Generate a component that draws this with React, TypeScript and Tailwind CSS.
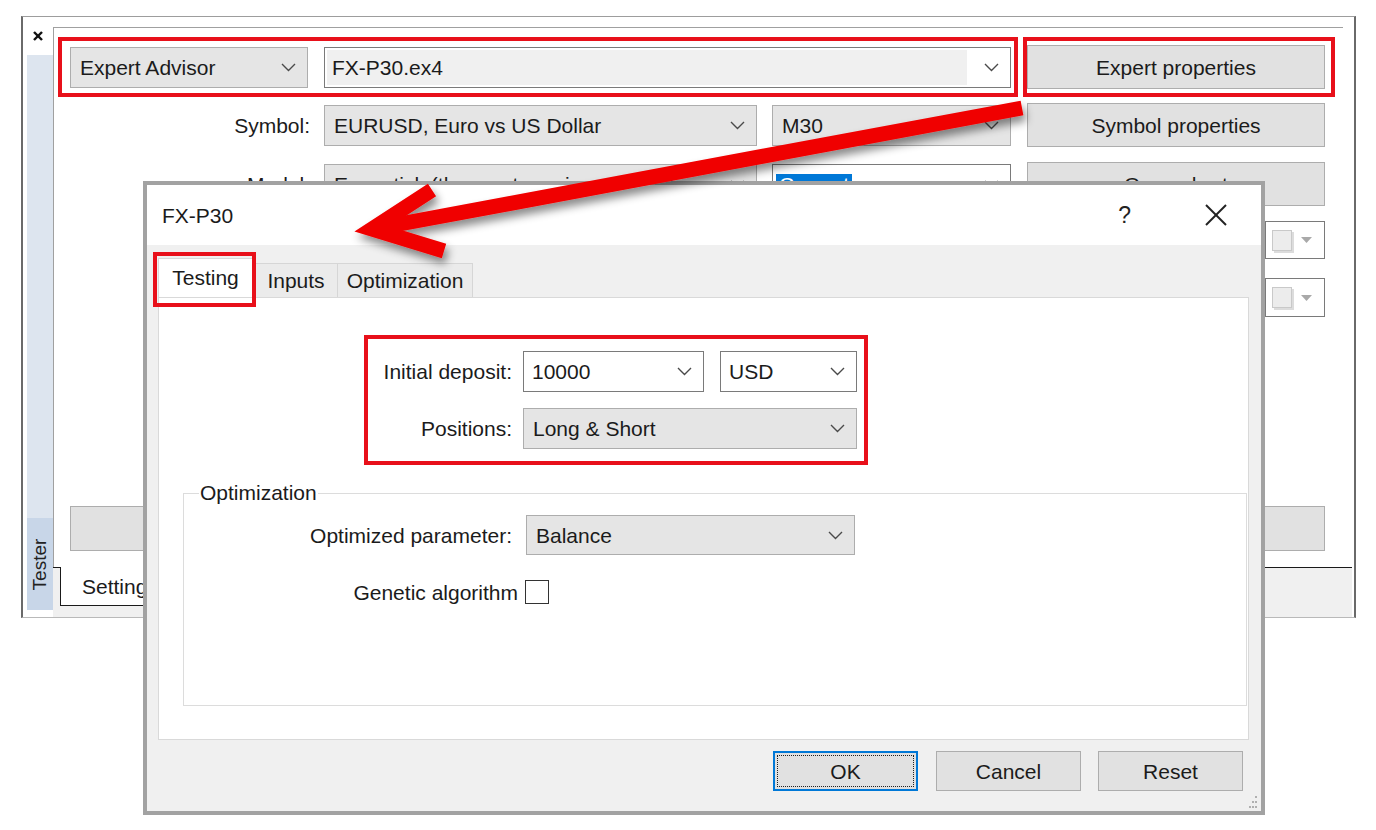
import React from "react";

const Chevron = () => (
  <svg width="15" height="9" viewBox="0 0 15 9" className="shrink-0">
    <polyline points="1,1 7.5,7.5 14,1" fill="none" stroke="#4a4a4a" strokeWidth="1.4" />
  </svg>
);

function GraySelect({ text, className }: { text: string; className: string }) {
  return (
    <div
      className={`flex items-center justify-between bg-[#e5e5e5] border border-[#adadad] pl-[9px] pr-[11px] overflow-hidden whitespace-nowrap ${className}`}
    >
      <span>{text}</span>
      <Chevron />
    </div>
  );
}

function WhiteCombo({ text, className }: { text: string; className: string }) {
  return (
    <div
      className={`flex items-center justify-between bg-white border border-[#7a7a7a] pl-[8px] pr-[11px] whitespace-nowrap ${className}`}
    >
      <span>{text}</span>
      <Chevron />
    </div>
  );
}

function Btn({ text, className }: { text: string; className: string }) {
  return (
    <div
      className={`flex items-center justify-center bg-[#e1e1e1] border border-[#adadad] whitespace-nowrap ${className}`}
    >
      {text}
    </div>
  );
}

function SmallDrop() {
  return (
    <div className="w-[60px] h-full bg-white border border-[#7a7a7a] flex items-center pl-[6px] gap-[9px]">
      <div className="w-[20px] h-[21px] bg-[#ececec] border border-[#c9c9c9] shadow-[2px_2px_0_#dcdcdc]" />
      <svg width="11" height="6" viewBox="0 0 11 6">
        <polygon points="0,0 11,0 5.5,6" fill="#a9a9a9" />
      </svg>
    </div>
  );
}

function TesterWindow() {
  return (
    <div className="w-[1335px] h-[602px] flex bg-white border-l-2 border-r-2 border-t border-b border-l-[#6a6a6a] border-r-[#6a6a6a] border-t-[#9d9d9d] border-b-[#b9b9b9]">
      {/* side bar */}
      <div className="w-[30px] flex flex-col">
        <div className="h-[38px] flex justify-center pt-[14px]">
          <svg width="10" height="10" viewBox="0 0 10 10">
            <line x1="1" y1="1" x2="9" y2="9" stroke="#111" strokeWidth="2.4" />
            <line x1="9" y1="1" x2="1" y2="9" stroke="#111" strokeWidth="2.4" />
          </svg>
        </div>
        <div className="flex-1 ml-[4px] mb-[7px] bg-[#dde5ef] flex flex-col justify-end">
          <div className="h-[92px] bg-[#c8d6e8] flex items-center justify-center">
            <span className="-rotate-90 text-[19px] whitespace-nowrap text-[#222]">Tester</span>
          </div>
        </div>
      </div>

      {/* main */}
      <div className="flex-1 flex flex-col pt-[10px]">
        <div className="h-[540px] mr-[11px] border-t border-l border-[#a0a0a0] bg-white flex flex-col">
          {/* Row 1 */}
          <div className="flex mt-[9px] ml-[4px] gap-[5px]">
            <div className="w-[960px] h-[60px] border-4 border-[#e8101a] flex items-start pt-[6px] pl-[8px] gap-[16px]">
              <GraySelect text="Expert Advisor" className="w-[238px] h-[41px]" />
              <div className="w-[687px] h-[41px] border border-[#7a7a7a] bg-white flex items-center p-[2px]">
                <div className="w-[640px] h-full bg-[#f0f0f0] flex items-center pl-[5px]">FX-P30.ex4</div>
                <div className="flex-1 flex justify-end pr-[9px]">
                  <Chevron />
                </div>
              </div>
            </div>
            <div className="w-[312px] h-[60px] border-4 border-[#e8101a] pt-[4px]">
              <Btn text="Expert properties" className="w-[298px] h-[44px]" />
            </div>
          </div>

          {/* Row 2 */}
          <div className="flex items-center mt-[6px] h-[44px]">
            <div className="w-[256px] text-right">Symbol:</div>
            <GraySelect text="EURUSD, Euro vs US Dollar" className="ml-[14px] w-[433px] h-[41px]" />
            <GraySelect text="M30" className="ml-[15px] w-[239px] h-[41px]" />
            <Btn text="Symbol properties" className="ml-[16px] w-[298px] h-[44px]" />
          </div>

          {/* Row 3 */}
          <div className="flex items-center mt-[15px] h-[44px]">
            <div className="w-[256px] text-right">Model:</div>
            <GraySelect text="Every tick (the most precise method)" className="ml-[14px] w-[433px] h-[41px]" />
            <div className="ml-[15px] w-[239px] h-[41px] bg-white border border-[#7a7a7a] flex items-center justify-between pl-[3px] pr-[11px]">
              <span className="bg-[#0078d7] text-white px-[3px]">Current</span>
              <Chevron />
            </div>
            <Btn text="Open chart" className="ml-[16px] w-[298px] h-[44px]" />
          </div>

          {/* Row 4 */}
          <div className="flex justify-end pr-[18px] mt-[15px] h-[38px]">
            <SmallDrop />
          </div>
          {/* Row 5 */}
          <div className="flex justify-end pr-[18px] mt-[19px] h-[39px]">
            <SmallDrop />
          </div>

          {/* wide button */}
          <div className="mt-[189px] ml-[16px] w-[1255px] h-[45px] bg-[#e1e1e1] border border-[#adadad] flex items-center justify-center">
            Start
          </div>
        </div>

        {/* bottom tab strip */}
        <div className="flex-1 bg-[#f0f0f0] border-t border-[#1a1a1a] mr-[2px]">
          <div className="-mt-px ml-[7px] w-[110px] h-[39px] bg-white border-l border-b border-[#1a1a1a] flex items-center pl-[21px]">
            Settings
          </div>
        </div>
      </div>
    </div>
  );
}

function Dialog() {
  return (
    <div className="absolute left-[143px] top-[181px] w-[1122px] h-[634px] border-4 border-[#a2a2a2] bg-[#f0f0f0] flex flex-col">
      {/* title */}
      <div className="h-[60px] bg-white flex items-center pl-[15px] pr-[34px]">
        <span>FX-P30</span>
        <span className="ml-auto text-[23px] text-[#222]">?</span>
        <svg width="22" height="22" viewBox="0 0 22 22" className="ml-[74px]">
          <line x1="1" y1="1" x2="21" y2="21" stroke="#222" strokeWidth="2" />
          <line x1="21" y1="1" x2="1" y2="21" stroke="#222" strokeWidth="2" />
        </svg>
      </div>

      {/* body */}
      <div className="relative flex-1 flex flex-col pl-[11px] pr-[12px] pt-[13px]">
        {/* tabs */}
        <div className="flex items-end h-[39px]">
          <div className="w-[95px] h-[39px] bg-white border-t border-l border-r border-[#d9d9d9] flex items-center justify-center pb-[2px]">
            Testing
          </div>
          <div className="ml-[2px] w-[83px] h-[34px] bg-[#ebebeb] border-t border-r border-[#d6d6d6] flex items-center justify-center">
            Inputs
          </div>
          <div className="w-[135px] h-[34px] bg-[#ebebeb] border-t border-r border-[#d6d6d6] flex items-center justify-center">
            Optimization
          </div>
        </div>

        {/* tab panel */}
        <div className="h-[443px] bg-white border border-[#d9d9d9] flex flex-col">
          <div className="ml-[205px] mt-[37px] w-[504px] h-[130px] border-4 border-[#e8101a] flex flex-col pt-[12px]">
            <div className="flex items-center h-[41px]">
              <div className="w-[144px] text-right">Initial deposit:</div>
              <WhiteCombo text="10000" className="ml-[11px] w-[181px] h-[41px]" />
              <WhiteCombo text="USD" className="ml-[16px] w-[137px] h-[41px]" />
            </div>
            <div className="flex items-center h-[41px] mt-[16px]">
              <div className="w-[144px] text-right">Positions:</div>
              <GraySelect text="Long & Short" className="ml-[11px] w-[334px] h-[41px]" />
            </div>
          </div>

          <fieldset className="mt-[16px] ml-[24px] mr-[1px] h-[225px] border border-[#dcdcdc] flex flex-col">
            <legend className="ml-[15px] px-[1px] leading-[24px]">Optimization</legend>
            <div className="flex items-center mt-[10px] h-[40px]">
              <div className="w-[328px] text-right">Optimized parameter:</div>
              <GraySelect text="Balance" className="ml-[14px] w-[329px] h-[40px]" />
            </div>
            <div className="flex items-center mt-[25px] h-[24px]">
              <div className="w-[334px] text-right">Genetic algorithm</div>
              <div className="ml-[7px] w-[24px] h-[24px] border-[1.5px] border-[#333] bg-white" />
            </div>
          </fieldset>
        </div>

        {/* buttons */}
        <div className="flex justify-end mt-[11px] pr-[6px]">
          <div className="w-[145px] h-[40px] bg-[#e1e1e1] border-2 border-[#0078d7] p-[2px]">
            <div className="w-full h-full border border-dotted border-[#222] flex items-center justify-center">OK</div>
          </div>
          <Btn text="Cancel" className="ml-[18px] w-[145px] h-[40px]" />
          <Btn text="Reset" className="ml-[17px] w-[145px] h-[40px]" />
        </div>

        {/* red annotation around Testing tab */}
        <div className="absolute left-[6px] top-[7px] w-[103px] h-[55px] border-4 border-[#e8101a]" />

        {/* resize grip */}
        <svg width="10" height="12" viewBox="0 0 10 12" className="absolute right-[3px] bottom-[3px]">
          <rect x="7" y="0" width="2" height="2" fill="#b0b0b0" />
          <rect x="4" y="5" width="2" height="2" fill="#b0b0b0" />
          <rect x="7" y="5" width="2" height="2" fill="#b0b0b0" />
          <rect x="1" y="10" width="2" height="2" fill="#b0b0b0" />
          <rect x="4" y="10" width="2" height="2" fill="#b0b0b0" />
          <rect x="7" y="10" width="2" height="2" fill="#b0b0b0" />
        </svg>
      </div>
    </div>
  );
}

function Arrow() {
  return (
    <svg
      width="1376"
      height="830"
      viewBox="0 0 1376 830"
      className="absolute left-0 top-0 pointer-events-none"
    >
      <defs>
        <filter id="sh" x="-10%" y="-30%" width="120%" height="160%">
          <feDropShadow dx="3" dy="6" stdDeviation="4" floodColor="#000" floodOpacity="0.45" />
        </filter>
      </defs>
      <g filter="url(#sh)" fill="none" stroke="#f00000" strokeWidth="15">
        <line x1="1022" y1="108" x2="378" y2="228" strokeLinecap="butt" />
        <polyline points="432,190 372,229 444,251" strokeLinejoin="miter" strokeMiterlimit="10" />
      </g>
    </svg>
  );
}

export default function App() {
  return (
    <div className="relative w-[1376px] h-[830px] overflow-hidden bg-white text-[21px] leading-none text-[#1b1b1b] font-['Liberation_Sans',Arial,sans-serif]">
      <div className="pt-[16px] pl-[21px]">
        <TesterWindow />
      </div>
      <Dialog />
      <Arrow />
    </div>
  );
}
